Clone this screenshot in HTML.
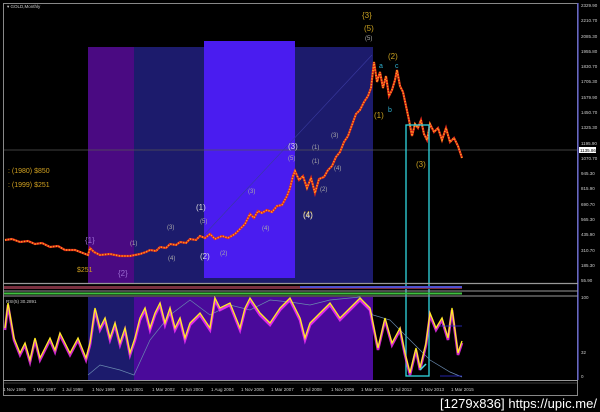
<!DOCTYPE html>
<html><head><meta charset="utf-8"><style>
html,body{margin:0;padding:0;background:#000;width:600px;height:412px;overflow:hidden}
svg{display:block}
text{font-family:"Liberation Sans",sans-serif}
</style></head><body>
<svg width="600" height="412" viewBox="0 0 600 412" xmlns="http://www.w3.org/2000/svg">
<rect width="600" height="412" fill="#000"/>
<rect x="88" y="47" width="46" height="236" fill="#4a0a82"/>
<rect x="134" y="47" width="239" height="236" fill="#1c1b6c"/>
<rect x="204" y="41" width="91" height="237" fill="#4a1cf0"/>
<line x1="3" y1="150" x2="578" y2="150" stroke="#555" stroke-width="0.8"/>
<rect x="3.5" y="3.5" width="574" height="392" fill="none" stroke="#888" stroke-width="1"/>
<line x1="578" y1="3" x2="578" y2="380" stroke="#5a5ad8" stroke-width="1.2"/>
<text x="7" y="8" font-size="4.5" fill="#ccc">▾ GOLD,Monthly</text>
<line x1="204" y1="235" x2="372" y2="55" stroke="#3a3aa0" stroke-width="0.6"/>
<polyline fill="none" stroke="#e02a1a" stroke-width="2.2" points="5,240 12,239 20,242 28,241 35,244 42,243 50,247 58,246 65,250 75,250 88,255 90,248 94,252 100,255 110,254 120,256 130,256 140,254 146,252 150,250 156,251 160,247 166,248 170,244 176,245 180,242 186,243 190,239 196,240 200,236 205,238 210,234 215,239 222,236 228,238 235,234 240,229 245,224 250,214 254,218 258,211 262,213 267,210 272,212 277,206 282,205 287,196 290,188 293,176 295,171 299,180 303,176 307,188 311,178 315,193 319,179 324,177 328,170 332,166 336,157 340,152 344,142 348,136 352,125 356,114 360,110 364,102 368,96 371,88 374,62 377,82 380,72 383,88 386,76 389,96 392,90 395,80 397,70 400,86 403,92 406,106 409,120 412,136 415,124 418,128 421,120 424,134 427,140 430,124 434,132 438,128 442,140 446,128 450,142 454,138 458,146 462,158"/>
<polyline fill="none" stroke="#ffa020" stroke-width="1.6" stroke-dasharray="1.2 1.6" points="5,240 12,239 20,242 28,241 35,244 42,243 50,247 58,246 65,250 75,250 88,255 90,248 94,252 100,255 110,254 120,256 130,256 140,254 146,252 150,250 156,251 160,247 166,248 170,244 176,245 180,242 186,243 190,239 196,240 200,236 205,238 210,234 215,239 222,236 228,238 235,234 240,229 245,224 250,214 254,218 258,211 262,213 267,210 272,212 277,206 282,205 287,196 290,188 293,176 295,171 299,180 303,176 307,188 311,178 315,193 319,179 324,177 328,170 332,166 336,157 340,152 344,142 348,136 352,125 356,114 360,110 364,102 368,96 371,88 374,62 377,82 380,72 383,88 386,76 389,96 392,90 395,80 397,70 400,86 403,92 406,106 409,120 412,136 415,124 418,128 421,120 424,134 427,140 430,124 434,132 438,128 442,140 446,128 450,142 454,138 458,146 462,158"/>
<g font-size="7" fill="#d0a020">
<text x="8" y="173">: (1980) $850</text>
<text x="8" y="187">: (1999) $251</text>
<text x="77" y="272">$251</text>
</g>
<g font-size="8" fill="#c8a020">
<text x="362" y="18">{3}</text><text x="364" y="31">(5)</text>
<text x="388" y="59">(2)</text><text x="374" y="118">(1)</text>
<text x="416" y="167">(3)</text><text x="303" y="217">(4)</text>
</g>
<g font-size="8" fill="#9a6ad0"><text x="85" y="243">{1}</text><text x="118" y="276">{2}</text></g>
<g font-size="8" fill="#ddd"><text x="196" y="210">(1)</text><text x="200" y="259">(2)</text><text x="288" y="149">(3)</text><text x="303" y="218">(4)</text></g>
<g font-size="6" fill="#aaa"><text x="130" y="245">(1)</text><text x="167" y="229">(3)</text><text x="168" y="260">(4)</text><text x="200" y="223">(5)</text><text x="220" y="255">(2)</text><text x="248" y="193">(3)</text><text x="262" y="230">(4)</text><text x="288" y="160">(5)</text><text x="312" y="163">(1)</text><text x="320" y="191">(2)</text><text x="334" y="170">(4)</text><text x="331" y="137">(3)</text><text x="312" y="149">(1)</text><text x="365" y="40">(5)</text></g>
<g font-size="7" fill="#30b0d0"><text x="379" y="68">a</text><text x="395" y="68">c</text><text x="388" y="112">b</text></g>
<rect x="406" y="125" width="23" height="251" fill="none" stroke="#30d8e0" stroke-width="1.3"/>
<g font-size="4.5" fill="#ccc">
<text x="581" y="7">2329.90</text><text x="581" y="22">2210.70</text><text x="581" y="38">2085.30</text><text x="581" y="53">1955.80</text><text x="581" y="68">1830.70</text><text x="581" y="83">1705.30</text><text x="581" y="99">1579.90</text><text x="581" y="114">1450.70</text><text x="581" y="129">1325.30</text><text x="581" y="145">1195.90</text><text x="581" y="160">1070.70</text><text x="581" y="175">945.30</text><text x="581" y="190">815.90</text><text x="581" y="206">690.70</text><text x="581" y="221">565.30</text><text x="581" y="236">435.90</text><text x="581" y="252">310.70</text><text x="581" y="267">185.30</text><text x="581" y="282">55.90</text>
<text x="581" y="299">100</text><text x="581" y="354">32</text><text x="581" y="378">0</text>
</g>
<rect x="579" y="147" width="17" height="6" fill="#fff"/><text x="580" y="152" font-size="4.5" fill="#000">1135.86</text>
<line x1="3" y1="283.5" x2="578" y2="283.5" stroke="#999" stroke-width="1.2"/>
<rect x="4" y="286" width="458" height="3" fill="#7a3040"/><rect x="300" y="286" width="162" height="2" fill="#5050d0"/>
<line x1="3" y1="291" x2="578" y2="291" stroke="#999" stroke-width="1"/>
<rect x="4" y="292.5" width="458" height="2" fill="#40c040"/>
<line x1="3" y1="296" x2="578" y2="296" stroke="#999" stroke-width="1"/>
<rect x="88" y="297" width="46" height="83" fill="#1c1b6c"/>
<rect x="134" y="297" width="239" height="83" fill="#4a0a9a"/>
<text x="6" y="303" font-size="4.5" fill="#ccc">RSI(5) 30.2891</text>
<polyline fill="none" stroke="#6a8ab0" stroke-width="0.7" points="88,375 100,365 120,370 134,375 150,340 170,315 190,300 210,315 230,305 250,310 270,300 290,302 310,305 330,300 360,297 373,315 390,320 410,340 430,360 450,372 462,377"/>
<polyline fill="none" stroke="#ff30ff" stroke-width="2.6" opacity="0.8" points="5,330 8,305 14,340 20,355 25,345 30,362 35,340 40,360 45,350 50,340 55,352 60,335 65,345 70,355 78,340 86,360 90,345 95,310 100,330 105,320 110,340 115,325 120,345 125,330 130,355 135,340 140,320 145,310 150,330 155,315 160,305 165,325 170,310 175,330 180,320 185,340 190,325 200,315 210,330 215,300 220,310 230,305 240,330 245,310 250,300 260,315 270,325 280,310 290,300 300,320 305,340 310,325 320,315 330,305 340,320 350,310 360,300 370,310 378,350 385,320 392,345 400,330 405,355 410,375 416,350 420,370 426,345 430,315 436,330 442,320 448,340 452,310 458,355 462,343"/>
<polyline fill="none" stroke="#ffee20" stroke-width="1.3" points="5,328 8,303 14,338 20,353 25,343 30,360 35,338 40,358 45,348 50,338 55,350 60,333 65,343 70,353 78,338 86,358 90,343 95,308 100,328 105,318 110,338 115,323 120,343 125,328 130,353 135,338 140,318 145,308 150,328 155,313 160,303 165,323 170,308 175,328 180,318 185,338 190,323 200,313 210,328 215,298 220,308 230,303 240,328 245,308 250,298 260,313 270,323 280,308 290,298 300,318 305,338 310,323 320,313 330,303 340,318 350,308 360,298 370,308 378,348 385,318 392,343 400,328 405,353 410,373 416,348 420,368 426,343 430,313 436,328 442,318 448,338 452,308 458,353 462,341"/>
<line x1="440" y1="326" x2="462" y2="326" stroke="#3030e0" stroke-width="0.8"/>
<line x1="440" y1="376" x2="462" y2="376" stroke="#3030e0" stroke-width="0.8"/>
<line x1="420" y1="370" x2="426" y2="364" stroke="#40e0e0" stroke-width="1.5"/>
<line x1="3" y1="380.5" x2="578" y2="380.5" stroke="#999" stroke-width="1"/>
<line x1="3" y1="383" x2="578" y2="383" stroke="#777" stroke-width="0.6"/>
<g font-size="4.5" fill="#ccc">
<text x="3" y="391">1 Nov 1995</text><text x="33" y="391">1 Mar 1997</text><text x="62" y="391">1 Jul 1998</text><text x="92" y="391">1 Nov 1999</text><text x="121" y="391">1 Jan 2001</text><text x="152" y="391">1 Mar 2002</text><text x="181" y="391">1 Jun 2003</text><text x="211" y="391">1 Aug 2004</text><text x="241" y="391">1 Nov 2005</text><text x="271" y="391">1 Mar 2007</text><text x="301" y="391">1 Jul 2008</text><text x="331" y="391">1 Nov 2009</text><text x="361" y="391">1 Mar 2011</text><text x="391" y="391">1 Jul 2012</text><text x="421" y="391">1 Nov 2013</text><text x="451" y="391">1 Mar 2015</text>
</g>
<text x="440" y="408" font-size="13" fill="#fff" font-family="Liberation Sans Narrow, Liberation Sans, sans-serif" textLength="157">[1279x836] https://upic.me/</text>
</svg>
</body></html>
